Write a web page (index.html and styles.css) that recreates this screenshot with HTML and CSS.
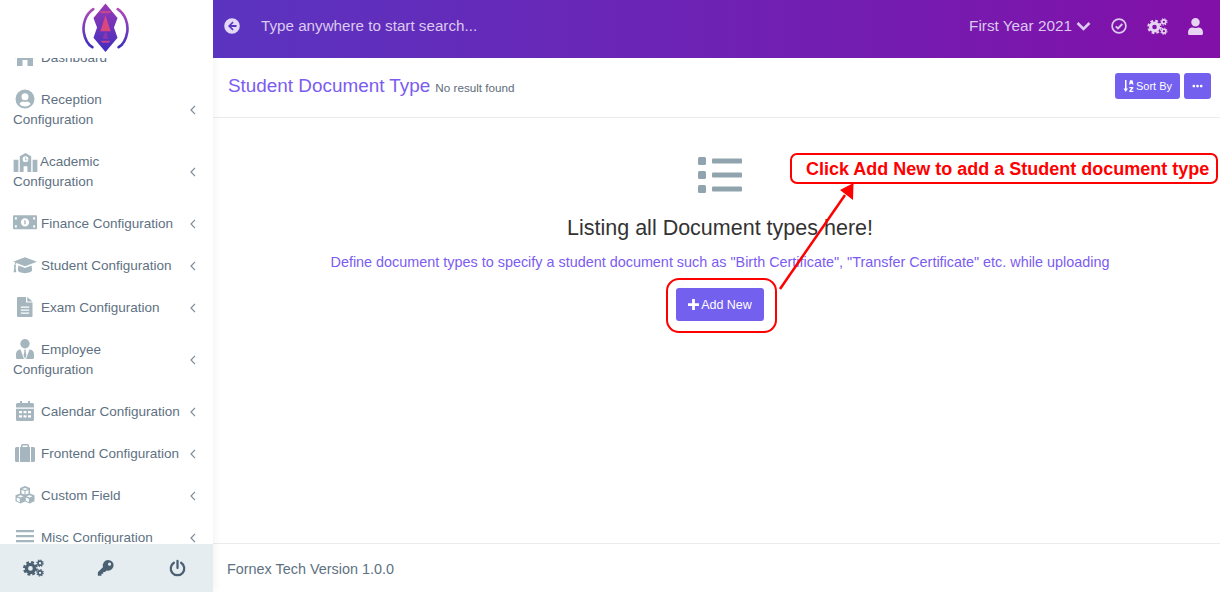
FILE: index.html
```html
<!DOCTYPE html>
<html lang="en">
<head>
<meta charset="utf-8">
<title>Student Document Type</title>
<link rel="stylesheet" href="styles.css">
</head>
<body>
<svg class="defs" width="0" height="0" aria-hidden="true">
  <defs>
    <linearGradient id="lg" x1="0" y1="0" x2="0" y2="1">
      <stop offset="0" stop-color="#b04cb8"/>
      <stop offset="1" stop-color="#3d2fc0"/>
    </linearGradient>
    <linearGradient id="lg2" x1="0" y1="0" x2="0" y2="1">
      <stop offset="0" stop-color="#9a38b4"/>
      <stop offset="1" stop-color="#3f2fc0"/>
    </linearGradient>
    <symbol id="i-home" viewBox="0 0 24 20"><path d="M12 1 1 10l1.200 1.500L4 10v9h5.500v-6h5v6H20v-9l1.800 1.500L23 10l-4-3.300V2h-3v2.200z"/></symbol>
    <symbol id="i-user-c" viewBox="0 0 24 24"><path fill-rule="evenodd" d="M12 2.500a9.500 9.500 0 1 0 0 19 9.500 9.500 0 0 0 0-19zm0 3.700a3.500 3.500 0 1 1 0 7 3.500 3.500 0 0 1 0-7zm0 13.400a7.300 7.300 0 0 1-5.600-2.600c.7-1.500 2.100-2.400 3.700-2.400.6.200 1.200.3 1.900.3s1.300-.1 1.900-.3c1.600 0 3 .9 3.700 2.400a7.300 7.300 0 0 1-5.600 2.600z"/></symbol>
    <symbol id="i-school" viewBox="0 0 25 20"><path fill-rule="evenodd" d="M12.500 0 6.500 3.500V20h4v-6h4v6h4V3.500zm0 3.500a3 3 0 1 1 0 6 3 3 0 0 1 0-6zM0 7h5v13H0zm20 0h5v13h-5z"/><path d="M12.100 4.700h.8v2.200h1.500v.8h-2.300z"/></symbol>
    <symbol id="i-money" viewBox="0 -2 25 20"><path fill-rule="evenodd" d="M1 0h23a1 1 0 0 1 1 1v12.500a1 1 0 0 1-1 1H1a1 1 0 0 1-1-1V1a1 1 0 0 1 1-1zm11.500 3a4.300 4.300 0 1 0 0 8.600 4.300 4.300 0 0 0 0-8.600zM2 2v2.300h2V2zm19 0v2.300h2V2zM2 10.300v2.300h2v-2.300zm19 0v2.300h2v-2.300z"/><path d="M11.800 5.200h1.400v4.200h-1.400z"/></symbol>
    <symbol id="i-grad" viewBox="0 -1 25 20"><path d="M12.500 1 25 5.500l-12.500 4.700L3.600 6.900C3 7.500 2.700 8.300 2.600 9.200c.4.300.6.600.6 1 0 .4-.2.700-.5 1l.7 5.300H.6l.8-5.300c-.3-.3-.5-.6-.5-1 0-.5.3-.9.7-1.100.1-1.100.4-2 1-2.800L0 5.500z"/><path d="M5.600 9.500l6.900 2.600 6.900-2.600.5 4.800c0 1.800-3.300 3.200-7.400 3.200s-7.400-1.400-7.400-3.200z"/></symbol>
    <symbol id="i-file" viewBox="-4 0 24 20"><path fill-rule="evenodd" d="M1 0h8v5.500h6.500V19a1 1 0 0 1-1 1H1a1 1 0 0 1-1-1V1a1 1 0 0 1 1-1zm2.800 9.500v1.300h8.400V9.500zm0 3v1.300h8.400v-1.300zm0 3v1.300h8.400v-1.300zM10.300 0l5.200 4.500h-5.200z"/></symbol>
    <symbol id="i-emp" viewBox="-3 0 24 20"><circle cx="9" cy="4.700" r="4.700"/><path d="M4.500 10.500 8 20H1.500A1.500 1.500 0 0 1 0 18.500V15c0-2.500 2-4.500 4.500-4.500zm9 0c2.500 0 4.500 2 4.500 4.500v3.500a1.500 1.500 0 0 1-1.500 1.500H10zM8 10.700h2l-.4 1.500.8 4.300L9 20l-1.400-3.500.8-4.300z"/></symbol>
    <symbol id="i-cal" viewBox="-3 0 24 20"><path fill-rule="evenodd" d="M4 0h2v2h6V0h2v2h2.500A1.500 1.500 0 0 1 18 3.500V6.500H0V3.500A1.500 1.500 0 0 1 1.500 2H4zM0 7.700h18v10.800a1.500 1.500 0 0 1-1.500 1.500h-15A1.500 1.500 0 0 1 0 18.500zm3 2.300v2.200h3V10zm4.500 0v2.200h3V10zm4.500 0v2.200h3V10zM3 14.200v2.200h3v-2.200zm4.500 0v2.200h3v-2.200zm4.500 0v2.200h3v-2.200z"/></symbol>
    <symbol id="i-case" viewBox="-2 -1 24 20"><path fill-rule="evenodd" d="M6 3V1.500A1.500 1.500 0 0 1 7.500 0h5A1.500 1.500 0 0 1 14 1.500V3zm-1 0h10v15H5zM7.500 1.500V3h5V1.500zM0 4.500A1.500 1.500 0 0 1 1.500 3H4v15H1.500A1.500 1.500 0 0 1 0 16.500zM16 3h2.500A1.500 1.500 0 0 1 20 4.500v12a1.500 1.500 0 0 1-1.500 1.500H16z"/></symbol>
    <symbol id="i-cubes" viewBox="-2 -1 24 20"><path fill-rule="evenodd" d="M10 0l5 1.900v5.600l4.500 1.700v6l-5 2.300-4.500-2.100-4.500 2.100-5-2.300v-6L5 7.500V1.900zM7 3l3 1.100L13 3l-3-1.100zM2.500 10.300l3 1.100 3-1.100-3-1.100zm9 0 3 1.100 3-1.100-3-1.100zM1.800 11.600v3.200l3 1.400v-3.400zm9 0v3.200l3 1.400v-3.400zM6.500 4v3.500l3 1.100V5.100zm7 0-3 1.100v3.500l3-1.100z"/></symbol>
    <symbol id="i-bars" viewBox="-3 -3 24 20"><path d="M0 0h18v2.300H0zm0 5h18v2.300H0zm0 5h18v2.300H0z"/></symbol>
    <symbol id="i-chev" viewBox="0 0 6 10"><path d="M5 .8 1 5l4 4.200" fill="none" stroke="currentColor" stroke-width="1.200"/></symbol>
    <symbol id="i-cogs" viewBox="0 0 24 20">
      <circle cx="8.500" cy="10.500" r="4.600" fill="none" stroke="currentColor" stroke-width="3.800"/>
      <circle cx="8.500" cy="10.500" r="7.300" fill="none" stroke="currentColor" stroke-width="2.400" stroke-dasharray="3.200 2.530"/>
      <circle cx="19.500" cy="4.500" r="2.300" fill="none" stroke="currentColor" stroke-width="1.900"/>
      <circle cx="19.500" cy="4.500" r="3.700" fill="none" stroke="currentColor" stroke-width="1.200" stroke-dasharray="1.500 1.400"/>
      <circle cx="19.500" cy="15.500" r="2.300" fill="none" stroke="currentColor" stroke-width="1.900"/>
      <circle cx="19.500" cy="15.500" r="3.700" fill="none" stroke="currentColor" stroke-width="1.200" stroke-dasharray="1.500 1.400"/>
    </symbol>
    <symbol id="i-user" viewBox="0 0 448 512"><path d="M224 256c70.700 0 128-57.300 128-128S294.700 0 224 0 96 57.300 96 128s57.300 128 128 128zm89.600 32h-16.700c-22.200 10.200-46.900 16-72.900 16s-50.600-5.800-72.900-16h-16.700C60.200 288 0 348.200 0 422.400V464c0 26.500 21.500 48 48 48h352c26.500 0 48-21.500 48-48v-41.600c0-74.200-60.200-134.400-134.400-134.400z"/></symbol>
  </defs>
</svg>

<div class="app">
  <aside class="sidebar">
    <div class="brand">
      <svg class="logo" viewBox="0 0 50 54" aria-hidden="true">
        <path d="M12 7.500C3.500 13 .5 24 2 32.500 3.300 40 7 45.500 11 48" fill="none" stroke="url(#lg)" stroke-width="2.800" stroke-linecap="round"/>
        <path d="M38 7.500c8.500 5.500 11.500 16.500 10 25C46.700 40 43 45.500 39 48" fill="none" stroke="url(#lg)" stroke-width="2.800" stroke-linecap="round"/>
        <path d="M25 1.500 37.800 17 34 27l3.800 11L25 53 12.200 38 16 27l-3.800-10z" fill="url(#lg2)"/>
        <path d="M25 14l5.500 17h-11z" fill="#d8487f"/>
        <path d="M18.500 9.500h13l-1.800 2.300h-9.400zM19.500 41h11l-2.200 2.200h-6.600z" fill="#c2478f"/>
        <path d="M25 31l3.200 8h-6.400z" fill="#8f36ae"/>
      </svg>
    </div>
    <nav class="nav">
      <ul class="menu">
        <li class="item"><span class="label"><svg class="ico"><use href="#i-home"/></svg>Dashboard</span></li>
        <li class="item tall"><span class="label"><svg class="ico ico-sm"><use href="#i-user-c"/></svg>Reception<br>Configuration</span><svg class="chev"><use href="#i-chev"/></svg></li>
        <li class="item tall"><span class="label"><svg class="ico-wide"><use href="#i-school"/></svg>Academic<br>Configuration</span><svg class="chev"><use href="#i-chev"/></svg></li>
        <li class="item"><span class="label"><svg class="ico"><use href="#i-money"/></svg>Finance Configuration</span><svg class="chev"><use href="#i-chev"/></svg></li>
        <li class="item"><span class="label"><svg class="ico"><use href="#i-grad"/></svg>Student Configuration</span><svg class="chev"><use href="#i-chev"/></svg></li>
        <li class="item"><span class="label"><svg class="ico"><use href="#i-file"/></svg>Exam Configuration</span><svg class="chev"><use href="#i-chev"/></svg></li>
        <li class="item tall"><span class="label"><svg class="ico"><use href="#i-emp"/></svg>Employee<br>Configuration</span><svg class="chev"><use href="#i-chev"/></svg></li>
        <li class="item"><span class="label"><svg class="ico"><use href="#i-cal"/></svg>Calendar Configuration</span><svg class="chev"><use href="#i-chev"/></svg></li>
        <li class="item"><span class="label"><svg class="ico"><use href="#i-case"/></svg>Frontend Configuration</span><svg class="chev"><use href="#i-chev"/></svg></li>
        <li class="item"><span class="label"><svg class="ico"><use href="#i-cubes"/></svg>Custom Field</span><svg class="chev"><use href="#i-chev"/></svg></li>
        <li class="item"><span class="label"><svg class="ico"><use href="#i-bars"/></svg>Misc Configuration</span><svg class="chev"><use href="#i-chev"/></svg></li>
      </ul>
    </nav>
    <div class="side-foot">
      <svg class="foot-ico"><use href="#i-cogs"/></svg>
      <svg class="foot-ico" viewBox="0 0 20 20" aria-hidden="true"><path fill="currentColor" fill-rule="evenodd" d="M13 1a6 6 0 0 1 0 12c-.7 0-1.300-.1-1.900-.3L9.500 14.500H7.500V16.500H5.500V18.500H1.500V14.700L7.300 8.900A6 6 0 0 1 13 1zm1.500 3a1.700 1.700 0 1 0 0 3.400 1.700 1.700 0 0 0 0-3.400z"/></svg>
      <svg class="foot-ico" viewBox="0 0 20 20" aria-hidden="true"><path fill="none" stroke="currentColor" stroke-width="2.500" stroke-linecap="round" d="M10 2v8M6 4.200a7.500 7.500 0 1 0 8 0"/></svg>
    </div>
  </aside>

  <main class="main">
    <header class="topbar">
      <svg class="back" viewBox="0 0 16 16" aria-hidden="true"><path fill="currentColor" fill-rule="evenodd" d="M8 .2a7.800 7.800 0 1 1 0 15.600A7.800 7.800 0 0 1 8 .2zM8.500 3.600 4 8l4.500 4.400 1.100-1.100-2.400-2.300h5.300V7H7.200l2.400-2.300z"/></svg>
      <span class="search">Type anywhere to start search...</span>
      <span class="year">First Year 2021</span>
      <svg class="year-chev" viewBox="0 0 15 10" aria-hidden="true"><path d="M1.500 2 7.500 8l6-6" fill="none" stroke="currentColor" stroke-width="2.600"/></svg>
      <svg class="top-check" viewBox="0 0 16 16" aria-hidden="true"><circle cx="8" cy="8" r="6.900" fill="none" stroke="currentColor" stroke-width="1.700"/><path d="M4.800 8.300 7 10.500l4.300-4.500" fill="none" stroke="currentColor" stroke-width="1.900"/></svg>
      <svg class="top-cogs"><use href="#i-cogs"/></svg>
      <svg class="top-user"><use href="#i-user"/></svg>
    </header>

    <section class="page-head">
      <h1 class="title">Student Document Type</h1>
      <span class="count">No result found</span>
      <button class="btn btn-sort">
        <svg class="sort-ico" viewBox="0 0 11 12" aria-hidden="true"><path fill="currentColor" d="M2 0h1.500v8.500H5L2.750 12 .5 8.500H2zM7 .3h2.500l1 4.200H9.200L9 3.700H7.500l-.2.8H6zM6.300 7h4v1.200L8 10.800h2.300V12h-4v-1.200L8.500 8.200H6.300z"/></svg>
        Sort By
      </button>
      <button class="btn btn-more" aria-label="More"><svg class="more-ico" viewBox="0 0 12 4" aria-hidden="true"><circle cx="2" cy="2" r="1.500"/><circle cx="6" cy="2" r="1.500"/><circle cx="10" cy="2" r="1.500"/></svg></button>
    </section>

    <section class="content">
      <svg class="list-ico" viewBox="0 0 44 36" aria-hidden="true">
        <rect x="0" y="0" width="8" height="8" rx="1.500"/><rect x="0" y="14" width="8" height="8" rx="1.500"/><rect x="0" y="28" width="8" height="8" rx="1.500"/>
        <rect x="14" y="1.500" width="30" height="5" rx="1"/><rect x="14" y="15.500" width="30" height="5" rx="1"/><rect x="14" y="29.500" width="30" height="5" rx="1"/>
      </svg>
      <h2 class="heading">Listing all Document types here!</h2>
      <p class="sub">Define document types to specify a student document such as "Birth Certificate", "Transfer Certificate" etc. while uploading</p>
      <button class="btn-add"><svg class="plus" viewBox="0 0 12 12" aria-hidden="true"><path d="M4.500 0h3v4.500H12v3H7.500V12h-3V7.500H0v-3h4.500z"/></svg>Add New</button>
    </section>

    <footer class="foot">Fornex Tech Version 1.0.0</footer>
  </main>
</div>

<div class="note">Click Add New to add a Student document type</div>
<div class="ring"></div>
<svg class="arrow" viewBox="0 0 90 125" aria-hidden="true">
  <path d="M5 120 70 26" fill="none" stroke="#f00" stroke-width="2.500"/>
  <path d="M78.500 14 65 21 78 31z" fill="#f00"/>
</svg>
</body>
</html>
```
FILE: styles.css
```css
* { box-sizing: border-box; }
html, body { margin: 0; height: 100%; }
body {
  font-family: "Liberation Sans", Arial, sans-serif;
  color: #333;
  background: #fff;
  overflow: hidden;
  position: relative;
}
.defs { position: absolute; }
.app { display: flex; height: 592px; }

/* Sidebar */
.sidebar {
  width: 213px;
  flex: none;
  display: flex;
  flex-direction: column;
  background: #fff;
  box-shadow: 0 0 10px rgba(0, 0, 0, .07);
  z-index: 1;
}
.brand { height: 58px; flex: none; display: flex; justify-content: center; align-items: flex-start; padding: 1px 3px 0 0; }
.logo { width: 47px; height: 53px; display: block; }
.nav { flex: 1; overflow: hidden; min-height: 0; }
.menu { list-style: none; margin: -21px 0 0; padding: 0; }
.item {
  display: flex;
  align-items: center;
  justify-content: space-between;
  height: 42px;
  padding: 0 17px 0 13px;
  font-size: 13.5px;
  line-height: 20px;
  color: #5e7182;
}
.tall { height: 62px; }
.label { width: 171px; }
.ico {
  display: inline-block;
  width: 24px;
  height: 20px;
  margin: -6px 4px -6px 0;
  vertical-align: 1px;
  fill: #a5b6be;
}
.ico-sm { width: 24px; height: 24px; margin: -8px 4px -8px 0; vertical-align: 1px; }
.ico-wide { display: inline-block; width: 25px; height: 19px; margin-right: 2px; vertical-align: -6px; fill: #a5b6be; }
.chev { width: 6px; height: 10px; flex: none; color: #7b8c9a; }

.side-foot {
  height: 48px;
  flex: none;
  display: grid;
  grid-template-columns: 66px 78px 66px;
  justify-items: center;
  align-items: center;
  background: #e6edf0;
  color: #4b6072;
}
.foot-ico { width: 21px; height: 18px; }

/* Main */
.main { flex: 1; min-width: 0; display: flex; flex-direction: column; }
.topbar {
  height: 58px;
  flex: none;
  display: flex;
  align-items: center;
  padding: 0 17px 6px 11px;
  background: linear-gradient(to right, #5a34c0, #8210a8);
  color: #dcc9f0;
  position: relative;
  z-index: 2;
}
.back { width: 16px; height: 16px; margin-right: 21px; color: #e3d8f6; }
.search { font-size: 15.2px; flex: 1; margin-bottom: 2px; }
.year { font-size: 15.3px; margin-bottom: 1px; }
.year-chev { width: 15px; height: 10px; margin-left: 4px; }
.top-check { width: 16px; height: 16px; margin-left: 20px; }
.top-cogs { width: 21px; height: 17px; margin-left: 20px; color: #e6d4f2; }
.top-user { width: 15px; height: 17px; margin-left: 20px; fill: #e6d4f2; }

.page-head {
  height: 60px;
  flex: none;
  display: flex;
  align-items: center;
  padding: 0 9px 3px 15px;
  border-bottom: 1px solid #ececec;
  background: #fff;
}
.title { margin: 0; font-size: 18.9px; font-weight: 400; color: #7b5cf0; }
.count { margin-left: 5px; margin-top: 3px; font-size: 11.7px; color: #5e6d7c; flex: 1; }
.btn {
  height: 26px;
  border: 0;
  border-radius: 3px;
  background: #7360ee;
  color: #fff;
  font: 11px "Liberation Sans", Arial, sans-serif;
  display: flex;
  align-items: center;
  justify-content: center;
  padding: 0;
}
.btn-sort { width: 65px; gap: 2px; }
.btn-more { width: 27px; margin-left: 4px; }
.sort-ico { width: 11px; height: 12px; }
.more-ico { width: 11px; height: 4px; fill: #fff; }

.content {
  flex: 1;
  display: flex;
  flex-direction: column;
  align-items: center;
  padding: 39px 0 0 7px;
  background: #fff;
}
.list-ico { width: 44px; height: 36px; fill: #90a4ae; display: block; }
.heading { margin: 23px 0 0; font-size: 21.5px; line-height: 25px; font-weight: 400; color: #333; }
.sub { margin: 11px 0 0; font-size: 14.4px; line-height: 20px; color: #7b5cf0; }
.btn-add {
  margin-top: 16px;
  width: 88px;
  height: 33px;
  border: 0;
  border-radius: 3px;
  background: #7360ee;
  color: #fff;
  font: 12.5px "Liberation Sans", Arial, sans-serif;
  display: flex;
  align-items: center;
  justify-content: center;
  gap: 2px;
  padding: 0;
}
.plus { width: 11px; height: 11px; fill: #fff; }

.foot {
  height: 49px;
  flex: none;
  display: flex;
  align-items: center;
  padding: 2px 0 0 14px;
  border-top: 1px solid #ececec;
  font-size: 14.4px;
  color: #5e7182;
  background: #fff;
}

/* Annotations drawn over the screenshot */
.note {
  position: absolute;
  left: 790px;
  top: 153px;
  width: 428px;
  height: 31px;
  border: 2.500px solid #f00;
  border-radius: 7px;
  background: #fff;
  color: #f00;
  font-size: 18px;
  font-weight: 700;
  line-height: 28px;
  padding-left: 14px;
  white-space: nowrap;
  z-index: 3;
}
.ring {
  position: absolute;
  left: 666px;
  top: 278px;
  width: 111px;
  height: 55px;
  border: 2.500px solid #f00;
  border-radius: 13px;
  z-index: 3;
}
.arrow {
  position: absolute;
  left: 775px;
  top: 169px;
  width: 90px;
  height: 125px;
  z-index: 4;
}
```
